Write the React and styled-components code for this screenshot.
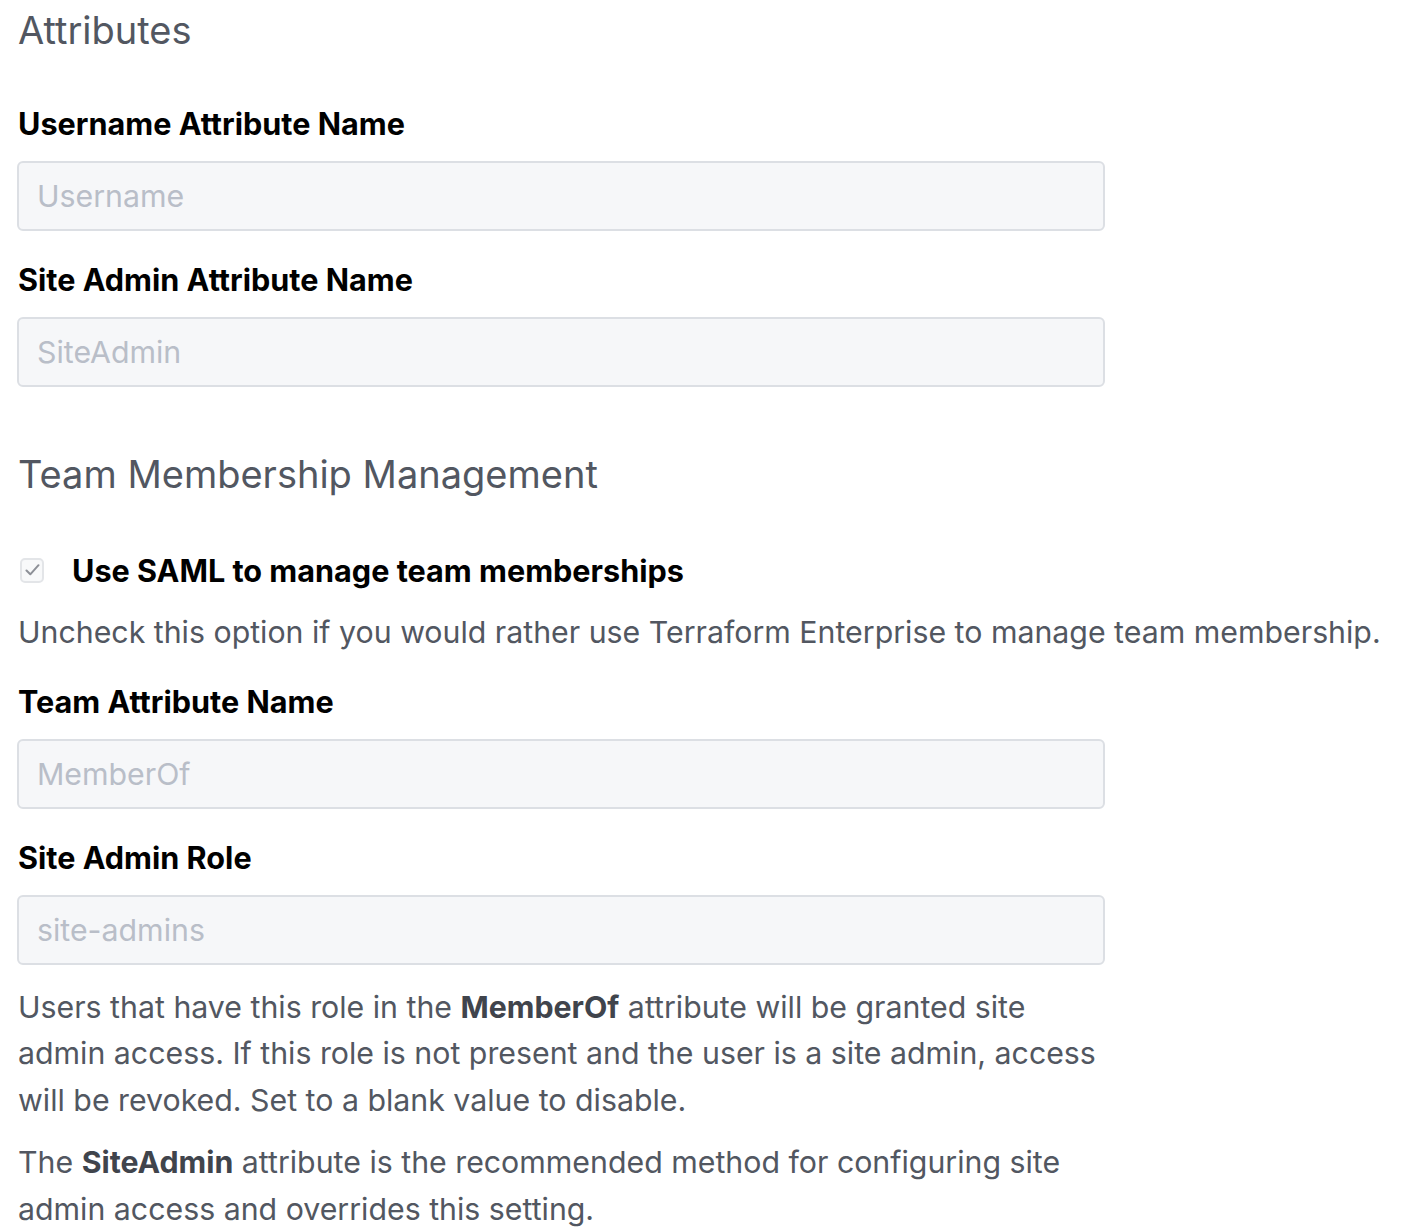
import React from 'react';
import styled, { createGlobalStyle } from 'styled-components';

const GlobalStyle = createGlobalStyle`
  body {
    margin: 0;
    background: #fff;
    font-family: Inter, "Liberation Sans", sans-serif;
  }
`;

const Page = styled.div`
  padding: 0 18px;
  width: 1414px;
  box-sizing: border-box;
`;

const SectionTitle = styled.h3`
  margin: ${p => p.$top || 0}px 0 0;
  font-size: 38px;
  font-weight: 400;
  line-height: 60px;
  color: #525761;
`;

const Field = styled.div`
  margin-top: ${p => p.$top || 0}px;
  width: 1088px;
`;

const Label = styled.label`
  display: block;
  font-size: 30.6px;
  font-weight: 700;
  line-height: 40px;
  color: #000;
  margin-bottom: 17px;
`;

const Input = styled.input`
  display: block;
  box-sizing: border-box;
  width: 1088px;
  height: 70px;
  margin-left: -1px;
  padding: 0 18px;
  border: 2px solid #dcdfe4;
  border-radius: 6px;
  background: #f6f7f9;
  font-family: inherit;
  font-size: 30.3px;
  color: #1f2124;
  outline: none;
  &::placeholder {
    color: #b9bec8;
  }
`;

const CheckRow = styled.label`
  display: flex;
  align-items: center;
  gap: 28px;
  margin-top: 46px;
  padding-left: 2px;
  height: 40px;
  font-size: 30.6px;
  font-weight: 700;
  color: #000;
`;

const Box = styled.span`
  width: 24px;
  height: 25px;
  box-sizing: border-box;
  border: 2px solid #e3e5e8;
  border-radius: 5px;
  background: #f8f9fa;
  display: flex;
  align-items: center;
  justify-content: center;
`;

const Help = styled.p`
  margin: ${p => p.$top || 0}px 0 0;
  width: ${p => p.$wide ? 'auto' : '1088px'};
  font-size: 30.3px;
  line-height: 46.5px;
  color: #525761;
  b {
    font-weight: 700;
    color: #40444c;
  }
`;

export default function App() {
  return (
    <Page>
      <GlobalStyle />
      <SectionTitle>Attributes</SectionTitle>

      <Field $top={44}>
        <Label>Username Attribute Name</Label>
        <Input placeholder="Username" />
      </Field>
      <Field $top={29}>
        <Label>Site Admin Attribute Name</Label>
        <Input placeholder="SiteAdmin" />
      </Field>

      <SectionTitle $top={57}>Team Membership Management</SectionTitle>

      <CheckRow>
        <Box>
          <svg width="15" height="12" viewBox="0 0 15 12">
            <path d="M1.5 6.5 L5.3 10.3 L13.5 1.2" fill="none" stroke="#8d9097" strokeWidth="2" strokeLinecap="round" strokeLinejoin="round" />
          </svg>
        </Box>
        Use SAML to manage team memberships
      </CheckRow>
      <Help $top={19} $wide>
        Uncheck this option if you would rather use Terraform Enterprise to manage team membership.
      </Help>

      <Field $top={26}>
        <Label>Team Attribute Name</Label>
        <Input placeholder="MemberOf" />
      </Field>
      <Field $top={29}>
        <Label>Site Admin Role</Label>
        <Input placeholder="site-admins" />
      </Field>

      <Help $top={19}>
        Users that have this role in the <b>MemberOf</b> attribute will be granted site
        admin access. If this role is not present and the user is a site admin, access
        will be revoked. Set to a blank value to disable.
      </Help>
      <Help $top={16}>
        The <b>SiteAdmin</b> attribute is the recommended method for configuring site
        admin access and overrides this setting.
      </Help>
    </Page>
  );
}
